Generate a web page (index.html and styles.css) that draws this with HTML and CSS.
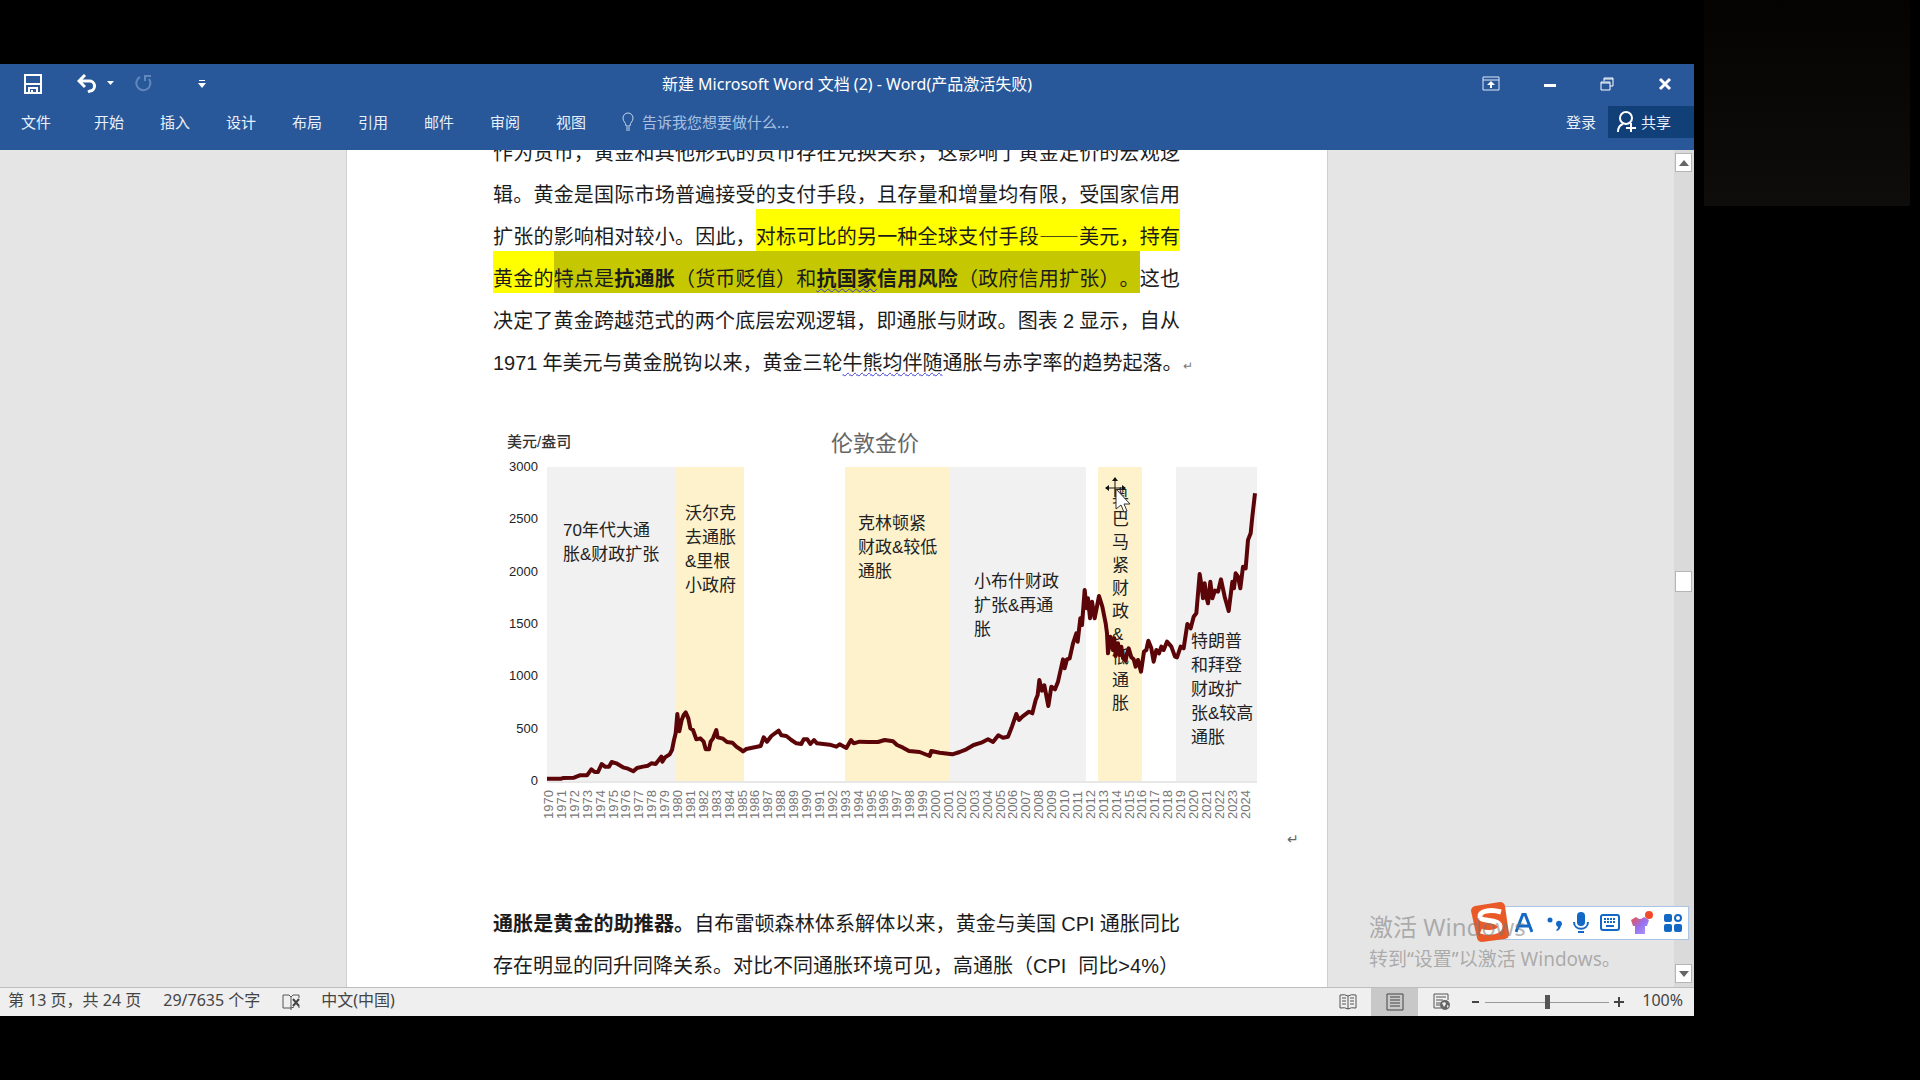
FILE: index.html
```html
<!DOCTYPE html>
<html lang="zh-CN">
<head>
<meta charset="utf-8">
<title>新建 Microsoft Word 文档 (2) - Word</title>
<link rel="stylesheet" href="styles.css">
</head>
<body>
<main class="window">
  <header class="ribbon">
    <div class="titlebar">
      <div class="quick">
        <button class="icon-btn" aria-label="保存"><svg width="20" height="20" viewBox="0 0 20 20"><path d="M2 1h16v18H2zM3 10h14M6 19v-5h8v5" fill="none" stroke="#fff" stroke-width="2"/><path d="M8 16h2v3H8z" fill="#fff"/></svg></button>
        <button class="icon-btn undo" aria-label="撤消"><svg width="38" height="20" viewBox="0 0 38 20"><path d="M3 7h9a5 5 0 0 1 1 10l-2 1M8 1L2 7l6 6" fill="none" stroke="#fff" stroke-width="3"/><path d="M30 7h7l-3.500 4z" fill="#fff"/></svg></button>
        <button class="icon-btn" aria-label="重复"><svg width="18" height="20" viewBox="0 0 18 20"><path d="M5 3a7 7 0 1 0 9 2M10 7V2h6" fill="none" stroke="#6188bd" stroke-width="2"/></svg></button>
        <button class="icon-btn more" aria-label="自定义快速访问工具栏"><svg width="8" height="8" viewBox="0 0 8 8"><path d="M1 0h6v1H1zM0 3h8L4 8z" fill="#fff"/></svg></button>
      </div>
      <h1 class="title">新建 Microsoft Word 文档 (2) - Word(产品激活失败)</h1>
      <div class="controls">
        <button class="icon-btn" aria-label="功能区显示选项"><svg width="18" height="16" viewBox="0 0 18 16"><path d="M1 1h16v13H1zM1 4h16" fill="none" stroke="#dce8f8" stroke-width="1"/><path d="M9 5l4 4h-3v3H8V9H5z" fill="#fff"/></svg></button>
        <button class="icon-btn" aria-label="最小化"><svg width="12" height="16" viewBox="0 0 12 16"><path d="M0 8h12v3H0z" fill="#fff"/></svg></button>
        <button class="icon-btn" aria-label="还原"><svg width="14" height="16" viewBox="0 0 14 16"><path d="M1 6h9v8H1zM1 7h9M4 5V2h9v8h-3M4 3h9" fill="none" stroke="#fff" stroke-width="1"/></svg></button>
        <button class="icon-btn" aria-label="关闭"><svg width="14" height="16" viewBox="0 0 14 16"><path d="M2 3l10 10M12 3L2 13" stroke="#fff" stroke-width="3"/></svg></button>
      </div>
    </div>
    <nav class="tabs">
      <a class="tab file" href="#">文件</a><a class="tab" href="#">开始</a><a class="tab" href="#">插入</a><a class="tab" href="#">设计</a><a class="tab" href="#">布局</a><a class="tab" href="#">引用</a><a class="tab" href="#">邮件</a><a class="tab" href="#">审阅</a><a class="tab" href="#">视图</a>
      <label class="tell">
        <svg width="12" height="20" viewBox="0 0 12 20"><path d="M4 14c0-4-3-4-3-8a5 5 0 0 1 10 0c0 4-3 4-3 8zM4 16h4M4 18h4" fill="none" stroke="#c3d5ee" stroke-width="1"/></svg>
        <input type="text" placeholder="告诉我您想要做什么..." aria-label="告诉我您想要做什么">
      </label>
      <a class="login" href="#">登录</a>
      <button class="share"><svg width="19" height="22" viewBox="0 0 19 22"><circle cx="9" cy="7" r="6" fill="none" stroke="#fff" stroke-width="2"/><path d="M1 21c0-5 2-7 5-8M14 12v9M9 17h10" fill="none" stroke="#fff" stroke-width="2"/></svg>共享</button>
    </nav>
  </header>

  <section class="workspace">
    <div class="canvas">
      <article class="page">
        <div class="para">
          <p class="line">作为货币，黄金和其他形式的货币存在兑换关系，这影响了黄金定价的宏观逻</p>
          <p class="line">辑。黄金是国际市场普遍接受的支付手段，且存量和增量均有限，受国家信用</p>
          <p class="line">扩张的影响相对较小。因此，<mark>对标可比的另一种全球支付手段——美元，持有</mark></p>
          <p class="line"><mark>黄金的</mark><mark class="selected">特点是<b>抗通胀</b>（货币贬值）和<b><span class="grammar">抗国家</span>信用风险</b>（政府信用扩张）。</mark>这也</p>
          <p class="line">决定了黄金跨越范式的两个底层宏观逻辑，即通胀与财政。图表<span class="latin">2</span>显示，自从</p>
          <p class="line last"><span class="latin first">1971</span>年美元与黄金脱钩以来，黄金三轮<span class="grammar">牛熊均伴随</span>通胀与赤字率的趋势起落。<span class="mark">↵</span></p>
        </div>
        <figure class="chart">
          <svg width="100%" height="440" role="img" aria-label="伦敦金价">
            <g class="bands">
              <path class="grey" d="M54 47h129v314H54zM456 47h137v314H456zM683 47h81v314h-81z"/>
              <path class="gold" d="M183 47h68v314h-68zM352 47h104v314H352zM605 47h44v314h-44z"/>
            </g>
            <path d="M54 362h710" stroke="#d0d0d0"/>
            <text class="unit" x="14" y="27">美元/盎司</text>
            <text class="heading" x="338" y="31">伦敦金价</text>
            <g id="axis-y" class="axis-y"></g>
            <g id="axis-x" class="axis-x"></g>
            <g id="notes" class="notes"></g>
            <svg x="54" y="47" width="710" height="314" viewBox="202 141 2130 942" overflow="visible">
              <polyline fill="none" stroke="#5c0508" stroke-width="12" stroke-linejoin="round" points="202,1076 245,1076 250,1074 283,1073 300,1066 322,1066 335,1048 345,1056 355,1056 366,1032 376,1040 388,1040 396,1026 410,1030 430,1042 445,1046 461,1054 472,1044 490,1040 505,1037 515,1030 528,1032 545,1010 548,1025 556,1012 570,1003 577,990 583,960 588,940 593,882 599,934 606,900 612,885 618,877 626,895 632,925 640,930 650,958 662,955 672,965 678,988 688,988 693,965 700,955 710,930 714,952 730,956 742,966 758,968 770,980 785,990 790,994 800,987 825,982 843,978 852,952 862,965 875,948 897,932 905,946 920,948 935,960 950,970 965,972 972,958 983,958 992,972 1003,960 1012,970 1050,974 1070,980 1080,973 1100,984 1114,960 1122,970 1140,965 1165,966 1195,966 1215,960 1240,964 1252,975 1270,983 1288,993 1320,996 1350,1008 1355,993 1380,998 1418,1003 1440,996 1460,988 1482,975 1505,968 1525,958 1540,966 1556,946 1570,953 1585,950 1595,925 1610,882 1618,900 1628,890 1648,875 1658,880 1668,840 1674,825 1679,780 1687,812 1694,796 1706,858 1715,800 1726,808 1735,785 1750,718 1755,745 1762,718 1770,715 1780,670 1790,640 1794,665 1802,595 1807,615 1815,510 1821,565 1825,535 1831,595 1837,545 1845,595 1858,528 1868,560 1878,610 1882,640 1885,700 1892,650 1900,690 1904,655 1908,708 1915,670 1920,705 1925,680 1930,715 1938,722 1942,700 1947,685 1955,712 1962,718 1968,740 1975,720 1984,755 1993,695 2000,690 2006,662 2015,685 2022,725 2030,690 2038,700 2045,680 2052,690 2062,665 2075,680 2086,710 2092,712 2103,680 2112,685 2123,612 2133,625 2142,590 2150,580 2160,462 2166,500 2170,535 2175,490 2180,530 2185,550 2192,485 2198,535 2206,512 2215,515 2224,478 2235,530 2247,573 2258,485 2263,505 2268,460 2275,470 2282,505 2290,440 2298,445 2305,360 2313,340 2318,290 2326,220"/>
            </svg>
            <g class="cursor">
              <path d="M622 59v18M613 68h18" stroke="#111" stroke-width="1"/>
              <path d="M622 57l3 4h-6zM612 68l4-3v6zM633 68l-4-3v6z" fill="#111"/>
              <path d="M623 69v20l5-4 3 7 3-1-3-7h6z" fill="#fff" stroke="#333" stroke-width="1"/>
            </g>
            <text class="return" x="794" y="424">↵</text>
          </svg>
        </figure>
        <div class="para">
          <p class="line"><b>通胀是黄金的助推器。</b>自布雷顿森林体系解体以来，黄金与美国<span class="latin">CPI</span>通胀同比</p>
          <p class="line last">存在明显的同升同降关系。对比不同通胀环境可见，高通胀（<span class="latin wide">CPI</span>同比<span class="latin tight">&gt;4%</span>）</p>
        </div>
      </article>
    </div>
    <div class="scrollbar">
      <button class="arrow" aria-label="向上滚动"><svg width="10" height="6" viewBox="0 0 10 6"><path d="M0 6l5-6 5 6z" fill="#666"/></svg></button>
      <div class="thumb"></div>
      <button class="arrow" aria-label="向下滚动"><svg width="10" height="6" viewBox="0 0 10 6"><path d="M0 0l5 6 5-6z" fill="#666"/></svg></button>
    </div>
    <div class="ime">
      <svg class="sogou" width="40" height="42" viewBox="0 0 40 42"><path d="M5 5L30 1q4 0 5 4l4 28q0 4-4 5L12 41q-4 0-5-4L1 10q0-4 4-5z" fill="#ea5a28"/><path d="M31 11C20 8 9 10 10 16c1 5 19 2 20 9 1 6-12 8-19 5" fill="none" stroke="#fff" stroke-width="5"/></svg>
      <svg width="18" height="20" viewBox="0 0 18 20"><path d="M1 19L8 1h2l7 18M4 13h10" fill="none" stroke="#1268c4" stroke-width="3"/></svg>
      <svg width="16" height="20" viewBox="0 0 16 20"><circle cx="3" cy="7" r="2.500" fill="#1268c4"/><path d="M9 11a3 3 0 1 1 5 2q-1 4-4 5l-1-1q2-1 2-3-2-1-2-3z" fill="#1268c4"/></svg>
      <svg width="16" height="22" viewBox="0 0 16 22"><rect x="4" y="0" width="8" height="14" rx="4" fill="#1268c4"/><path d="M1 10c0 9 14 9 14 0M5 20h6" fill="none" stroke="#1268c4" stroke-width="2"/></svg>
      <svg width="20" height="18" viewBox="0 0 20 18"><rect x="1" y="1" width="18" height="15" rx="2" fill="none" stroke="#1268c4" stroke-width="2"/><path d="M4 5h12M4 8h12" stroke="#1268c4" stroke-width="2" stroke-dasharray="2 1"/><path d="M6 12h8" stroke="#1268c4" stroke-width="2"/></svg>
      <svg width="24" height="26" viewBox="0 0 24 26"><defs><linearGradient id="shirt" x2="1" y2="1"><stop offset="0" stop-color="#ee5040"/><stop offset="0.500" stop-color="#9a70ee"/><stop offset="1" stop-color="#a8a0ff"/></linearGradient></defs><path d="M1 10l5-3q4 4 8 0l5 3-2 6h-2v8H5v-8H3z" fill="url(#shirt)"/><circle cx="19" cy="5" r="4" fill="#f04a2a"/></svg>
      <svg width="18" height="18" viewBox="0 0 18 18"><rect width="8" height="8" rx="2" fill="#1268c4"/><rect y="10" width="8" height="8" rx="2" fill="#1268c4"/><rect x="10" y="10" width="8" height="8" rx="2" fill="#1268c4"/><circle cx="14" cy="4" r="3" fill="none" stroke="#1268c4" stroke-width="2"/></svg>
    </div>
    <div class="activate"><p class="big">激活 Windows</p><p class="small">转到“设置”以激活 Windows。</p></div>
  </section>

  <footer class="status">
    <span>第 13 页，共 24 页</span>
    <span>29/7635 个字</span>
    <svg width="19" height="17" viewBox="0 0 19 17"><path d="M9 14H1V1h6l2 2 2-2h6M9 3v13M9 14l3-1M17 1v3M17 12v2" fill="none" stroke="#555"/><path d="M11 5l6 7M17 5l-6 7" stroke="#444" stroke-width="2"/></svg>
    <span>中文(中国)</span>
    <div class="views">
      <button aria-label="阅读视图"><svg width="18" height="18" viewBox="0 0 18 18"><path d="M9 3Q6 1 1 2v13q5-1 8 1 3-2 8-1V2q-5-1-8 1zv13M3 5h4M3 8h4M3 11h4M11 5h4M11 8h4M11 11h4" fill="none" stroke="#555" stroke-width="1"/></svg></button>
      <button class="on" aria-label="页面视图"><svg width="18" height="18" viewBox="0 0 18 18"><path d="M1 1h16v16H1zM4 4h10M4 7h10M4 10h10M4 13h10" fill="none" stroke="#444" stroke-width="1"/></svg></button>
      <button aria-label="Web 版式视图"><svg width="18" height="18" viewBox="0 0 18 18"><path d="M8 15H1V1h14v6M3 4h10M3 7h7M3 10h5M3 12h4" fill="none" stroke="#555" stroke-width="1"/><circle cx="12" cy="12" r="5" fill="#666"/><path d="M9 10l3-1 1 2-2 3zM14 12l2 1-2 2z" fill="#efefef"/></svg></button>
    </div>
    <button class="step" aria-label="缩小"><svg width="10" height="10" viewBox="0 0 10 10"><path d="M1 5h7" stroke="#444" stroke-width="2"/></svg></button>
    <input class="zoom" type="range" min="0" max="200" value="100" aria-label="显示比例">
    <button class="step" aria-label="放大"><svg width="10" height="10" viewBox="0 0 10 10"><path d="M0 5h10M5 0v10" stroke="#444" stroke-width="2"/></svg></button>
    <span class="percent">100%</span>
  </footer>
</main>
<aside class="camera"></aside>
<script src="chart.js"></script>
</body>
</html>
```
FILE: styles.css
```css
* { box-sizing: border-box; }
body {
  margin: 0;
  min-height: 100vh;
  background: #000;
  display: grid;
  grid-template-columns: minmax(0, 1fr) 226px;
  font-family: "Noto Sans", "Noto Sans CJK SC", sans-serif;
  font-size: 15px;
  text-spacing-trim: space-all;
}
p, h1, figure { margin: 0; }
button { border: 0; padding: 0; background: none; font: inherit; color: inherit; }
a { color: inherit; text-decoration: none; }
svg { display: block; flex: none; }
.window { margin: 64px 0; height: calc(100vh - 128px); display: flex; flex-direction: column; }
.camera { width: 206px; height: 206px; margin-left: 10px; background: linear-gradient(#040302, #0e0d0c); }

.ribbon { background: #285899; color: #fff; height: 86px; flex: none; }
.titlebar { height: 40px; display: grid; grid-template-columns: 1fr auto 1fr; align-items: center; }
.quick { display: flex; align-items: center; padding-left: 23px; }
.undo { margin: 0 20px 0 34px; }
.more { margin-left: 45px; }
.title { font-size: 16px; font-weight: 400; line-height: 24px; }
.controls { display: flex; align-items: center; justify-content: flex-end; gap: 44px; padding-right: 22px; }
.tabs { display: flex; align-items: center; height: 32px; margin-top: 2px; line-height: 24px; color: #e9f0fa; }
.tab { width: 66px; flex: none; }
.tab.file { width: 94px; padding-left: 21px; }
.tell { display: flex; align-items: center; gap: 8px; flex: 1; }
.tell input { width: 200px; border: 0; padding: 0; background: none; font: inherit; color: #fff; outline: 0; }
.tell input::placeholder { color: #a9c1e3; opacity: 1; }
.login { margin-right: 12px; }
.share { background: #113f78; width: 86px; height: 32px; padding-left: 9px; display: flex; align-items: center; gap: 5px; }

.workspace { position: relative; flex: 1; min-height: 0; display: flex; background: #e5e5e5; overflow: hidden; }
.canvas { flex: 1; min-width: 0; overflow: hidden; }
.page { max-width: 982px; margin: -25px auto 0; padding: 0 147px 60px 146px; background: #fff; border: solid #cfcfcf; border-width: 0 1px; color: #1c1c1c; }
.line { height: 42px; padding-top: 12px; line-height: 30px; font-size: 20px; white-space: nowrap; text-align: justify; text-align-last: justify; font-family: "Noto Sans CJK SC", sans-serif; }
.line.last { text-align-last: left; }
.latin { font-family: "Liberation Sans", sans-serif; margin: 0 5px; }
.latin.first { margin-left: 0; }
.latin.wide { margin: 0 12px 0 0; }
.latin.tight { margin: 0; }
mark { background: #ff0; color: inherit; padding: 12px 0 1px; }
mark.selected { background: #c5c800; }
.grammar { text-decoration: underline wavy #3b3bd6 1px; text-underline-offset: 2px; }
.mark { font-size: 12px; color: #777; }

.chart { margin: 43px -123px 36px 0; }
.chart svg { overflow: visible; }
.grey { fill: #f1f1f1; }
.gold { fill: #fdf2cc; }
.chart text { font-family: "Liberation Sans", "Noto Sans CJK SC", sans-serif; }
.unit { font-size: 15px; fill: #333; font-weight: 500; }
.chart .heading { font-size: 22px; fill: #666; }
.axis-y { font-size: 13px; fill: #222; text-anchor: end; }
.axis-x { font-size: 13px; fill: #777; }
.notes { font-size: 17px; fill: #222; }
.return { font-size: 14px; fill: #666; }

.scrollbar { width: 20px; background: #dadada; display: flex; flex-direction: column; justify-content: space-between; align-items: center; padding: 3px 2px 4px 1px; }
.arrow { width: 17px; height: 19px; background: #fff; border: 1px solid #b5b5b5; display: flex; align-items: center; justify-content: center; }
.thumb { width: 17px; height: 21px; margin-top: 26px; background: #fff; border: 1px solid #b5b5b5; }

.ime { position: absolute; right: 5px; bottom: 47px; height: 34px; width: 194px; padding: 0 6px 0 19px; background: #fff; border: 1px solid #a9c4e4; display: flex; align-items: center; justify-content: space-between; }
.ime svg:nth-child(2) { margin-right: 4px; }
.sogou { position: absolute; left: -26px; top: -6px; }
.activate { position: absolute; left: calc(100% - 325px); bottom: 14px; color: rgba(120, 120, 120, .55); white-space: nowrap; }
.big { font-size: 24px; line-height: 36px; }
.small { font-size: 19px; line-height: 28px; }

.status { height: 29px; flex: none; background: #efefef; border-top: 1px solid #bdbdbd; display: flex; align-items: center; padding: 0 11px 0 8px; color: #444; font-size: 16px; line-height: 24px; white-space: nowrap; }
.status > span { padding-bottom: 4px; }
.status > span + span { margin-left: 22px; }
.status > svg { margin: 0 20px 0 22px; }
.views { margin-left: auto; display: flex; height: 28px; }
.views button { width: 47px; display: flex; align-items: center; justify-content: center; }
.views .on { background: #c8c8c8; }
.step { width: 10px; }
.views + .step { margin-left: 6px; }
.zoom { appearance: none; width: 124px; height: 16px; margin: 0 5px 0 4px; background: linear-gradient(#999, #999) center / 100% 1px no-repeat; }
.zoom::-webkit-slider-thumb { appearance: none; width: 5px; height: 14px; background: #555; }
.status > .percent { margin-left: 18px; }
```
FILE: chart.js
```js
const NS = "http://www.w3.org/2000/svg";

function addText(parent, x, y, content, rotate) {
  const t = document.createElementNS(NS, "text");
  t.setAttribute("x", x);
  t.setAttribute("y", y);
  if (rotate) t.setAttribute("transform", `rotate(-90 ${x} ${y})`);
  t.textContent = content;
  parent.appendChild(t);
}

const axisY = document.getElementById("axis-y");
for (let v = 0; v <= 3000; v += 500) {
  addText(axisY, 45, Math.round(365 - v * 314 / 3000), v);
}

const axisX = document.getElementById("axis-x");
for (let year = 1970; year <= 2024; year++) {
  addText(axisX, Math.round(60 + (year - 1970) * 12.9), 399, year, true);
}

const notes = [
  { x: 70, y: 116, step: 24, lines: ["70年代大通", "胀&财政扩张"] },
  { x: 192, y: 99, step: 24, lines: ["沃尔克", "去通胀", "&里根", "小政府"] },
  { x: 365, y: 109, step: 24, lines: ["克林顿紧", "财政&较低", "通胀"] },
  { x: 481, y: 167, step: 24, lines: ["小布什财政", "扩张&再通", "胀"] },
  { x: 619, y: 82, step: 23, lines: ["奥", "巴", "马", "紧", "财", "政", "&", "低", "通", "胀"] },
  { x: 698, y: 227, step: 24, lines: ["特朗普", "和拜登", "财政扩", "张&较高", "通胀"] }
];
const notesGroup = document.getElementById("notes");
for (const n of notes) {
  n.lines.forEach((line, i) => addText(notesGroup, n.x, n.y + i * n.step, line));
}
```
